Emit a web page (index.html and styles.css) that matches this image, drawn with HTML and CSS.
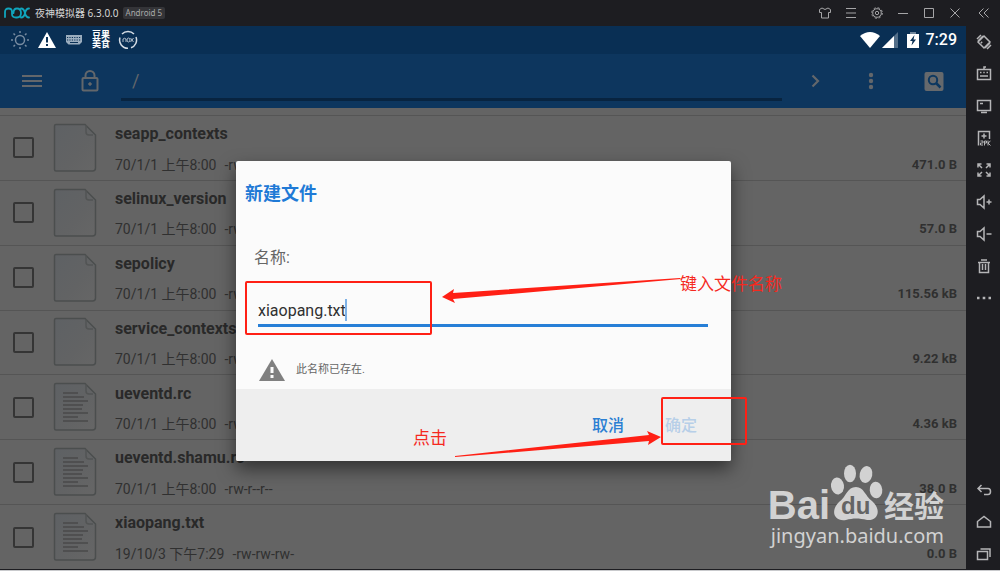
FILE: index.html
```html
<!DOCTYPE html>
<html lang="zh-CN">
<head>
<meta charset="utf-8">
<meta name="viewport" content="width=device-width, initial-scale=1">
<title>夜神模拟器</title>
<link rel="stylesheet" href="styles.css">
</head>
<body>
<svg class="defs" aria-hidden="true">
  <defs>
    <linearGradient id="paper" x1="0" y1="0" x2="1" y2="1"><stop offset="0" stop-color="#5e6164"/><stop offset=".6" stop-color="#626364"/><stop offset="1" stop-color="#666666"/></linearGradient>
    <symbol id="file" viewBox="0 0 44 50">
      <path d="M3 1.500H32L42.500 12V45Q42.500 48 39.500 48H3Q1.500 48 1.500 46.500V3Q1.500 1.500 3 1.500Z" fill="url(#paper)" stroke="#4b4e4e" stroke-width="1.500"/>
      <path d="M33 2V9Q33 12 36 12H40" fill="none" stroke="#525454" stroke-width="1.500"/>
    </symbol>
    <symbol id="textfile" viewBox="0 0 44 50">
      <use href="#file"/>
      <path d="M10 11H25M10 15H31M10 19H35M10 23H30M10 27H29M10 31H35M10 35H25M10 39H35" stroke="#494a4a" stroke-width="1.400"/>
    </symbol>
  </defs>
</svg>
<div class="window">
  <header class="titlebar">
    <svg class="logo" viewBox="0 0 26 12" fill="none" stroke="#10a5bd" stroke-width="1.800" stroke-linecap="round"><path d="M1 10V5Q1 1.500 4.500 1.500T8 5V7Q8 10.500 12 10.500H13Q17 10.500 17 6T13 1.500Q9.500 1.500 9.500 6M17 1.500Q20 1.500 21 6T25 10.500M25 1.500Q22 1.500 21 6T17 10.500"/></svg>
    <span class="app-name">夜神模拟器 6.3.0.0</span>
    <span class="version">Android 5</span>
    <div class="controls">
      <button aria-label="皮肤"><svg viewBox="0 0 16 16"><path d="M5 3L2.500 4.500V7.500H4.500V13H11.500V7.500H13.500V4.500L11 3Q8 6 5 3Z"/></svg></button>
      <button aria-label="菜单"><svg viewBox="0 0 16 16"><path d="M3 3.500H13M3 8H13M3 12.500H13"/></svg></button>
      <button aria-label="设置"><svg viewBox="0 0 16 16"><circle cx="8" cy="8" r="4.300"/><circle cx="8" cy="8" r="1.700"/><circle cx="8" cy="8" r="5.300" stroke-dasharray="2.200 1.960"/></svg></button>
      <button aria-label="最小化"><svg viewBox="0 0 16 16"><path d="M3 8.500H13"/></svg></button>
      <button aria-label="最大化"><svg viewBox="0 0 16 16"><path d="M3.500 3.500H12.500V12.500H3.500Z"/></svg></button>
      <button aria-label="关闭"><svg viewBox="0 0 16 16"><path d="M3.500 3.500L12.500 12.500M12.500 3.500L3.500 12.500"/></svg></button>
      <button class="collapse" aria-label="收起"><svg viewBox="0 0 16 16"><path d="M7.500 3.500L3 8L7.500 12.500M12.500 3.500L8 8L12.500 12.500"/></svg></button>
    </div>
  </header>

  <main class="device">
    <div class="statusbar">
      <div class="notices">
        <svg viewBox="0 0 20 20" fill="none" stroke="#778ba0" stroke-width="1.500"><circle cx="10" cy="10" r="4.500"/><path d="M10 1V3M10 17V19M1 10H3M17 10H19M3.500 3.500L5 5M15 15L16.500 16.500M16.500 3.500L15 5M5 15L3.500 16.500"/></svg>
        <svg viewBox="0 0 20 20"><path d="M10 2L19 18H1Z" fill="#fff"/><path d="M9 7H11V12.500H9ZM9 14H11V16H9Z" fill="#0a3055"/></svg>
        <svg viewBox="0 0 20 20"><path d="M2 5H18V12L15.500 14.500H4.500L2 12Z" fill="#9badbe"/><path d="M3 7.500H17M3 10H17" stroke="#0a3055" stroke-dasharray="1.200 1.200"/><path d="M6 12.500H14" stroke="#0a3055"/></svg>
        <span class="badge">豆果<br>美食</span>
        <svg viewBox="0 0 20 20" fill="none" stroke="#d5dce4" stroke-width="1.500"><path d="M4 4A8.300 8.300 0 0 1 16 4M18 7A8.300 8.300 0 0 1 13 17.800M10 18.300A8.300 8.300 0 0 1 2 7.500"/><path d="M5 12V9Q6.500 7.500 8 9V12M9 10Q9 8 10.500 8T12 10T10.500 12T9 10M12.500 8L15.500 12M15.500 8L12.500 12" stroke-width=".8"/></svg>
      </div>
      <div class="signals">
        <svg class="wifi" viewBox="0 0 20 16"><path d="M0 4Q10 -4 20 4L10 16Z" fill="#fff"/></svg>
        <svg class="cell" viewBox="0 0 16 16"><path d="M16 0V16H0Z" fill="#536e88"/><path d="M12 4V16H0Z" fill="#fff"/></svg>
        <svg class="battery" viewBox="0 0 12 16"><path d="M3 0H9V2H3Z" fill="#6f869c"/><path d="M0 2H12V16H0Z" fill="#fff"/><path d="M7.500 3L3 9H5.500L4.500 13.500L9 7.500H6.500Z" fill="#0a3055"/></svg>
        <time>7:29</time>
      </div>
    </div>
    <div class="toolbar">
      <button aria-label="导航"><svg viewBox="0 0 24 24" stroke="#63676b" stroke-width="2"><path d="M2 7H22M2 12H22M2 17H22"/></svg></button>
      <button class="lock" aria-label="锁定"><svg viewBox="0 0 24 24" fill="none" stroke="#63676b" stroke-width="2"><rect x="4.500" y="9" width="15" height="12.500" rx="1"/><path d="M7.500 9V6.500A4.500 4.500 0 0 1 16.500 6.500V9"/><circle cx="12" cy="15" r="1.300" fill="#63676b" stroke-width="1"/></svg></button>
      <input class="path" value="/" aria-label="路径">
      <button class="go" aria-label="前往"><svg viewBox="0 0 24 24" fill="none" stroke="#63676b" stroke-width="2.200"><path d="M9.500 6.500L15 12L9.500 17.500"/></svg></button>
      <button class="more" aria-label="更多"><svg viewBox="0 0 24 24" fill="#63676b"><circle cx="12" cy="6" r="2.200"/><circle cx="12" cy="12" r="2.200"/><circle cx="12" cy="18" r="2.200"/></svg></button>
      <button class="search" aria-label="搜索"><svg viewBox="0 0 24 24"><rect x="2.500" y="3" width="19" height="19" rx="2" fill="#66696c"/><g fill="none" stroke="#0d3860" stroke-width="2"><circle cx="11" cy="11" r="4.200"/><path d="M14 14L18.500 18.500" stroke-width="2.500"/></g></svg></button>
    </div>
    <ul class="files">
      <li><input type="checkbox" id="f1"><svg><use href="#file"/></svg><label for="f1">seapp_contexts</label><p><span>70/1/1 上午8:00</span><span>-rw-r--r--</span></p><b>471.0 B</b></li>
      <li><input type="checkbox" id="f2"><svg><use href="#file"/></svg><label for="f2">selinux_version</label><p><span>70/1/1 上午8:00</span><span>-rw-r--r--</span></p><b>57.0 B</b></li>
      <li><input type="checkbox" id="f3"><svg><use href="#file"/></svg><label for="f3">sepolicy</label><p><span>70/1/1 上午8:00</span><span>-rw-r--r--</span></p><b>115.56 kB</b></li>
      <li><input type="checkbox" id="f4"><svg><use href="#file"/></svg><label for="f4">service_contexts</label><p><span>70/1/1 上午8:00</span><span>-rw-r--r--</span></p><b>9.22 kB</b></li>
      <li><input type="checkbox" id="f5"><svg><use href="#textfile"/></svg><label for="f5">ueventd.rc</label><p><span>70/1/1 上午8:00</span><span>-rw-r--r--</span></p><b>4.36 kB</b></li>
      <li><input type="checkbox" id="f6"><svg><use href="#textfile"/></svg><label for="f6">ueventd.shamu.rc</label><p><span>70/1/1 上午8:00</span><span>-rw-r--r--</span></p><b>38.0 B</b></li>
      <li><input type="checkbox" id="f7"><svg><use href="#textfile"/></svg><label for="f7">xiaopang.txt</label><p><span>19/10/3 下午7:29</span><span>-rw-rw-rw-</span></p><b>0.0 B</b></li>
    </ul>

    <form class="dialog" role="dialog" aria-labelledby="dialog-title">
      <div class="dialog-body">
        <h1 id="dialog-title">新建文件</h1>
        <label for="filename">名称:</label>
        <div class="field"><input id="filename" value="xiaopang.txt"><i class="caret"></i></div>
        <p class="warning"><svg viewBox="0 0 26 22"><path d="M13 0L26 22H0Z" fill="#808080"/><path d="M11.500 8H14.500V14H11.500ZM11.500 16H14.500V19H11.500Z" fill="#fbfbfb"/></svg>此名称已存在.</p>
      </div>
      <div class="actions"><button type="button">取消</button><button type="button" disabled>确定</button></div>
      <div class="notes">
        <svg viewBox="0 0 560 300" fill="none">
          <rect x="10" y="121" width="185" height="52" rx="1" stroke="#ff2015" stroke-width="2"/>
          <rect x="426" y="237" width="84" height="46" rx="1" stroke="#ff2015" stroke-width="2"/>
          <path d="M206 136L218 128L217 132L444 117L445 118L217 138L219 142Z" fill="#ff2015"/>
          <path d="M219 295L413 274L411 270L425 276L412 284L413 280L219 296Z" fill="#ff2015"/>
        </svg>
        <span class="note-input">键入文件名称</span>
        <span class="note-click">点击</span>
      </div>
    </form>

    <div class="watermark">
      <div class="brand">
        <span class="bai">Bai</span>
        <span class="paw"><svg viewBox="0 0 50 58" fill="#d2d2d2"><ellipse cx="6.500" cy="22" rx="6.500" ry="8.500" transform="rotate(-8 6.500 22)"/><ellipse cx="19" cy="9.500" rx="6" ry="8.800"/><ellipse cx="35" cy="10.500" rx="6.300" ry="8.500" transform="rotate(12 35 10.500)"/><ellipse cx="45" cy="26" rx="6.300" ry="8.300" transform="rotate(-5 45 26)"/><path d="M25 23C33 23 34 32 41 37C51 46 47 57 36 56C28 54 22 54 15 56C3 58 -1 47 8 38C16 32 16 23 25 23Z"/></svg><span>du</span></span>
        <span class="exp">经验</span>
      </div>
      <div class="site">jingyan.baidu.com</div>
    </div>
  </main>

  <nav class="sidebar" aria-label="工具">
    <button aria-label="旋转"><svg viewBox="0 0 16 16"><path d="M8 2L14 8L8 14L2 8Z"/><path d="M1 5L5 1M2 7L7 2M9 14L14 9M11 15L15 11"/><path d="M5 8L6 9" stroke-width="2"/></svg></button>
    <button aria-label="键盘"><svg viewBox="0 0 16 16"><path d="M1.500 3.500H14.500V13.500H1.500ZM8 3V1H10M4 6.500H5.500M7.300 6.500H8.700M10.500 6.500H12M4 10H12"/></svg></button>
    <button aria-label="显示器"><svg viewBox="0 0 16 16"><path d="M1.500 2.500H14.500V12.500H1.500ZM5 14.500H11M4 5.500H7"/></svg></button>
    <button aria-label="安装 APK"><svg viewBox="0 0 16 16"><path d="M2.500 15.500V1.500H13.500V9M8 3.500V8.500M5.500 6H10.500"/><path d="M4.500 11H7V13H4.500V15H7M8.500 15.500V11H10.500V13H8.500M12 10.500V15.500M14.500 11L12 13L14.500 15.500" stroke-width="1"/></svg></button>
    <button aria-label="全屏"><svg viewBox="0 0 16 16"><path d="M6 6L2 2M2 5.500V2H5.500M10 6L14 2M10.500 2H14V5.500M6 10L2 14M2 10.500V14H5.500M10 10L14 14M10.500 14H14V10.500"/></svg></button>
    <button aria-label="音量加"><svg viewBox="0 0 16 16"><path d="M1.500 5.500H4L8 2V14L4 10.500H1.500ZM10.500 8H15.500M13 5.500V10.500"/></svg></button>
    <button aria-label="音量减"><svg viewBox="0 0 16 16"><path d="M1.500 5.500H4L8 2V14L4 10.500H1.500ZM10.500 8H15.500"/></svg></button>
    <button aria-label="删除"><svg viewBox="0 0 16 16"><path d="M2 4.500H14M5 2H11M3.500 5V14.500H12.500V5M6.500 6V12M9.500 6V12"/></svg></button>
    <button aria-label="更多"><svg viewBox="0 0 16 16"><path d="M1 8H3.500M6.700 8H9.300M12.500 8H15" stroke-width="2.300"/></svg></button>
    <button class="back" aria-label="返回"><svg viewBox="0 0 16 16"><path d="M5.500 3L2 6.500L5.500 10M2 6.500H12Q14.500 6.500 14.500 9.500T12 12.500H8"/></svg></button>
    <button aria-label="主页"><svg viewBox="0 0 16 16"><path d="M1.500 7.500L8 2.500L14.500 7.500V13H1.500Z"/></svg></button>
    <button aria-label="最近任务"><svg viewBox="0 0 16 16"><path d="M1.500 5.500H11.500V13.500H1.500ZM4.500 3H14V11"/></svg></button>
  </nav>
</div>
</body>
</html>
```
FILE: styles.css
```css
* { box-sizing: border-box; }
body {
  margin: 0;
  background: #c9cacd;
  font-family: Roboto, "Noto Sans CJK SC", sans-serif;
}
button, input { font: inherit; color: inherit; border: 0; padding: 0; background: none; border-radius: 0; }
button { display: grid; place-items: center; }
input { outline: 0; min-width: 0; }
p, h1, ul { margin: 0; padding: 0; }
.defs { position: absolute; width: 0; height: 0; }

.window {
  display: grid;
  grid-template: 26px 1fr / 1fr 34px;
  min-height: calc(100vh - 1px);
  background: #1d1d21;
}
.titlebar {
  grid-column: 1 / -1;
  display: flex;
  align-items: center;
  padding-left: 4px;
  color: #d6d6d6;
  font-family: "Noto Sans", "Noto Sans CJK SC", sans-serif;
}
.logo { width: 26px; height: 12px; }
.app-name { margin-left: 5px; font-size: 10px; line-height: 16px; }
.version {
  margin-left: 4px;
  padding: 0 3px;
  border-radius: 2px;
  background: #343438;
  color: #aaa;
  font-size: 8px;
  line-height: 12px;
}
.controls { display: flex; margin-left: auto; }
.controls button { width: 26px; height: 26px; }
.controls .collapse { width: 32px; }
.controls svg, .sidebar svg { width: 16px; height: 16px; fill: none; stroke: #a5a5a7; }
.controls svg { stroke-width: 1; }

.sidebar { display: flex; flex-direction: column; padding-left: 2px; }
.sidebar button { height: 32px; }
.sidebar svg { stroke: #b5b5b7; stroke-width: 1.5; }
.sidebar .back { margin-top: auto; }

.device {
  position: relative;
  display: flex;
  flex-direction: column;
  background: #646464;
  margin-bottom: 1px;
  overflow: hidden;
}
.statusbar {
  display: flex;
  justify-content: space-between;
  align-items: center;
  height: 28px;
  padding: 0 9px 0 10px;
  background: #092f54;
  color: #fff;
}
.notices, .signals { display: flex; align-items: center; }
.notices { gap: 7px; }
.notices svg { width: 20px; height: 20px; }
.badge { width: 20px; text-align: center; font-size: 9px; line-height: 9px; font-weight: 700; white-space: nowrap; }
.wifi { width: 20px; height: 16px; }
.cell { width: 16px; height: 16px; margin-left: 2px; }
.battery { width: 12px; height: 16px; margin: 0 7px 0 9px; }
.signals time { font-size: 16px; font-weight: 500; line-height: 20px; }

.toolbar {
  display: flex;
  align-items: center;
  height: 54px;
  padding: 0 20px;
  background: #0d365e;
  color: #63676b;
}
.toolbar svg { width: 24px; height: 24px; }
.lock { margin-left: 34px; }
.path {
  flex: 1;
  align-self: stretch;
  margin: 8px 21px 7px 19px;
  padding-left: 11px;
  border-bottom: 3px solid #082440;
  font-size: 18px;
}
.more { margin-left: 32px; }
.search { margin-left: 39px; }

.files {
  flex: 1;
  display: grid;
  grid-auto-rows: 1fr;
  margin-top: 7px;
  list-style: none;
}
.files li {
  display: grid;
  grid-template: 1fr 1fr / 20px 48px 1fr auto;
  column-gap: 17px;
  align-items: center;
  padding: 3px 9px 0 13px;
  border-top: 1px solid #555;
}
.files input {
  appearance: none;
  grid-row: 1 / 3;
  width: 21px;
  height: 21px;
  margin: 0 0 3px;
  border: 2px solid #353535;
  border-radius: 2px;
}
.files svg { grid-row: 1 / 3; width: 44px; height: 50px; margin: 0 0 3px 3px; }
.files label { grid-column: 3 / 5; font-size: 16px; line-height: 20px; font-weight: 700; color: #292929; }
.files p { display: flex; gap: 8px; font-size: 14px; line-height: 20px; color: #303030; }
.files b { font-size: 13px; line-height: 20px; color: #303030; }

.dialog {
  position: absolute;
  top: 135px;
  left: 236px;
  right: 235px;
  border-radius: 2px;
  background: #fbfbfb;
  box-shadow: 0 8px 18px rgba(0, 0, 0, .5);
}
.dialog-body { display: flex; flex-direction: column; padding: 21px 23px 7px 9px; }
.dialog h1 { color: #1f7ad6; font-size: 18px; line-height: 24px; }
.dialog label { margin: 40px 0 0 9px; color: #666; font-size: 16px; line-height: 24px; }
.field { position: relative; margin: 26px 0 0 13px; }
.field input { display: block; width: 100%; height: 31px; border-bottom: 3px solid #277fd7; color: #303030; font-size: 16px; }
.caret { position: absolute; left: 87px; top: 3px; width: 2px; height: 22px; background: #7fb2e6; }
.warning { display: flex; align-items: center; gap: 11px; margin: 31px 0 0 14px; color: #666; font-size: 11px; line-height: 24px; }
.warning svg { width: 26px; height: 22px; }
.actions { display: flex; justify-content: flex-end; gap: 41px; padding: 25px 34px 23px; border-radius: 0 0 2px 2px; background: #eee; }
.actions button { color: #2b7fd3; font-size: 16px; line-height: 24px; font-weight: 500; }
.actions button:disabled { color: #b7cfe8; }

.notes { position: absolute; inset: 0; color: #f5291f; font: 17px/24px "Noto Sans CJK SC", sans-serif; pointer-events: none; }
.notes svg { position: absolute; top: 0; left: 0; width: 560px; height: 300px; }
.note-input { position: absolute; left: 444px; top: 110px; white-space: nowrap; }
.note-click { position: absolute; left: 177px; top: 264px; }

.watermark { position: absolute; right: 22px; bottom: 19px; color: #d2d2d2; }
.brand { display: flex; align-items: flex-end; justify-content: flex-end; height: 58px; }
.bai { font: 700 40px/34px "Liberation Sans", sans-serif; }
.paw { position: relative; width: 50px; height: 58px; margin-left: 1px; }
.paw svg { width: 50px; height: 58px; overflow: visible; }
.paw span { position: absolute; left: 10px; bottom: 4px; color: #646464; font: 700 24px/24px "Liberation Sans", sans-serif; }
.exp { margin-left: 3px; font: 700 30px/36px "Noto Sans CJK SC", sans-serif; }
.site { font: 20px/28px "Noto Sans", sans-serif; text-align: right; }
```
